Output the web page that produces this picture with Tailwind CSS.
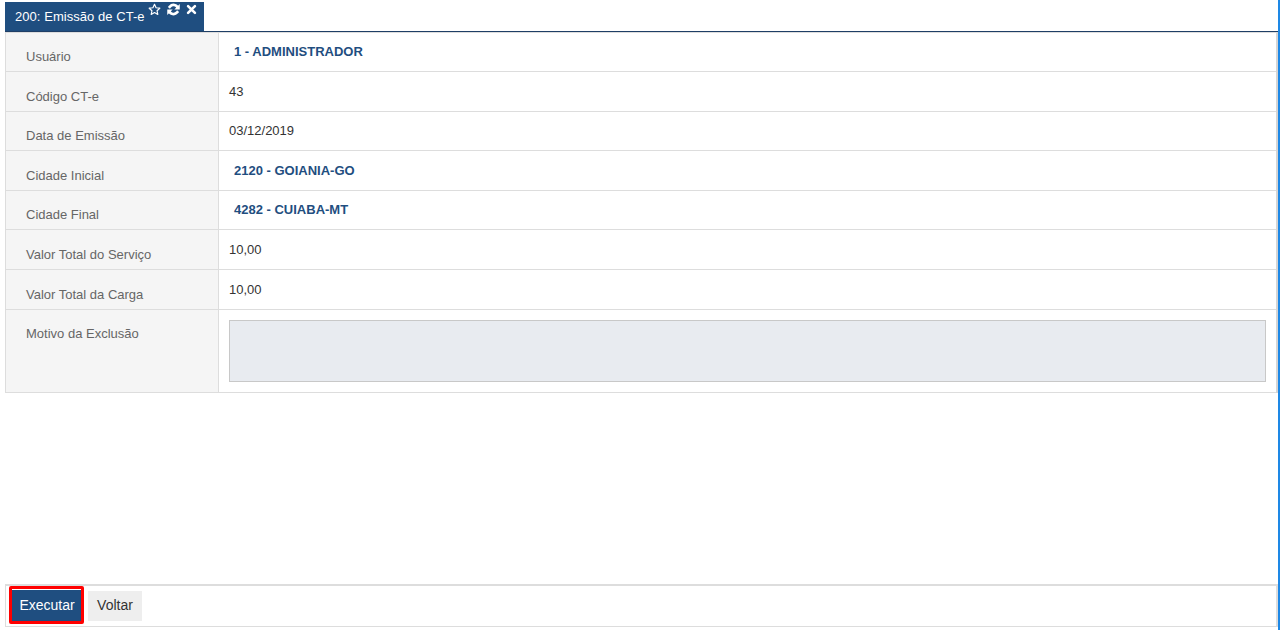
<!DOCTYPE html>
<html><head><meta charset="utf-8"><script src="https://cdn.jsdelivr.net/npm/@tailwindcss/browser@4"></script></head>
<body class="bg-white overflow-hidden font-['Liberation_Sans',Arial,sans-serif]">
<div class="relative w-[1280px] h-[630px] flex flex-col pl-[5px] pr-[2px] pt-[2px] bg-white">
  <div class="absolute right-0 top-0 bottom-0 w-[2px] bg-[#1e88e5]"></div>
  <div class="flex">
    <div class="w-[199px] h-[29px] bg-[#1f4e80] text-white flex items-start pl-[10px] relative">
      <span class="text-[13px] leading-[16px] mt-[7px] whitespace-nowrap tracking-[0.05px]">200: Emissão de CT-e</span>
      <svg class="absolute left-[143px] top-[1px]" width="13" height="13" viewBox="0 0 24 24" fill="none" stroke="white" stroke-width="2.2" stroke-linejoin="round"><path d="M12 2.5l2.9 6.3 6.9.8-5.1 4.7 1.4 6.8-6.1-3.4-6.1 3.4 1.4-6.8-5.1-4.7 6.9-.8z"/></svg>
      <svg class="absolute left-[162px] top-[1px]" width="13" height="13" viewBox="0 0 24 24" fill="none" stroke="white" stroke-width="5"><path d="M20 9.500A8.500 8.500 0 0 0 5.500 6.500L3.500 9"/><path d="M4 14.500a8.500 8.500 0 0 0 14.500 3l2-2.500"/><path d="M23.500 2v10h-10z" fill="white" stroke="none"/><path d="M.5 22v-10h10z" fill="white" stroke="none"/></svg>
      <svg class="absolute left-[181px] top-[2px]" width="11" height="11" viewBox="0 0 24 24" fill="none" stroke="white" stroke-width="5.600" stroke-linecap="round"><path d="M4.500 4.500l15 15M19.500 4.500l-15 15"/></svg>
    </div>
  </div>
  <div class="h-[1px] bg-[#1f3f66]"></div>
  <div class="border-t border-l border-r-2 border-[#dddddd] border-r-[#d5d5d5] text-[13px] text-[#333333]">
    <div class="flex h-[39px] border-b border-[#dddddd]"><div class="w-[213px] bg-[#f5f5f5] border-r border-[#dddddd] pl-[20px] pt-[16px] text-[#666666] leading-[16px]">Usuário</div><div class="pl-[15px] pt-[11px] font-bold text-[#1f4e80] leading-[16px]">1 - ADMINISTRADOR</div></div>
    <div class="flex h-[40px] border-b border-[#dddddd]"><div class="w-[213px] bg-[#f5f5f5] border-r border-[#dddddd] pl-[20px] pt-[17px] text-[#666666] leading-[16px]">Código CT-e</div><div class="pl-[10px] pt-[12px] leading-[16px]">43</div></div>
    <div class="flex h-[39px] border-b border-[#dddddd]"><div class="w-[213px] bg-[#f5f5f5] border-r border-[#dddddd] pl-[20px] pt-[16px] text-[#666666] leading-[16px]">Data de Emissão</div><div class="pl-[10px] pt-[11px] leading-[16px]">03/12/2019</div></div>
    <div class="flex h-[40px] border-b border-[#dddddd]"><div class="w-[213px] bg-[#f5f5f5] border-r border-[#dddddd] pl-[20px] pt-[17px] text-[#666666] leading-[16px]">Cidade Inicial</div><div class="pl-[15px] pt-[12px] font-bold text-[#1f4e80] leading-[16px]">2120 - GOIANIA-GO</div></div>
    <div class="flex h-[39px] border-b border-[#dddddd]"><div class="w-[213px] bg-[#f5f5f5] border-r border-[#dddddd] pl-[20px] pt-[16px] text-[#666666] leading-[16px]">Cidade Final</div><div class="pl-[15px] pt-[11px] font-bold text-[#1f4e80] leading-[16px]">4282 - CUIABA-MT</div></div>
    <div class="flex h-[40px] border-b border-[#dddddd]"><div class="w-[213px] bg-[#f5f5f5] border-r border-[#dddddd] pl-[20px] pt-[17px] text-[#666666] leading-[16px]">Valor Total do Serviço</div><div class="pl-[10px] pt-[12px] leading-[16px]">10,00</div></div>
    <div class="flex h-[40px] border-b border-[#dddddd]"><div class="w-[213px] bg-[#f5f5f5] border-r border-[#dddddd] pl-[20px] pt-[17px] text-[#666666] leading-[16px]">Valor Total da Carga</div><div class="pl-[10px] pt-[12px] leading-[16px]">10,00</div></div>
    <div class="flex h-[83px] border-b border-[#dddddd]"><div class="w-[213px] bg-[#f5f5f5] border-r border-[#dddddd] pl-[20px] pt-[16px] text-[#666666] leading-[16px]">Motivo da Exclusão</div><div class="flex-1 pl-[10px] pr-[10px] pt-[10px]"><div class="h-[62px] bg-[#e8ebf0] border border-[#c8c8c8]"></div></div></div>
  </div>
  <div class="flex-1"></div>
  <div class="mb-[3px] h-[43px] border-t-2 border-l border-r-2 border-b border-[#dddddd] flex items-start pl-[3px] gap-[4px]">
    <button class="w-[75px] h-[38px] border-[3px] border-[#ff0000] rounded-[2px] bg-[#1f4e80] text-white text-[14px] leading-[16px] pl-[1px] shadow-[inset_0_1px_0_white]">Executar</button>
    <button class="w-[54px] h-[30px] mt-[5px] bg-[#eeeeee] text-[#333333] text-[14px] leading-[16px] pb-[2px]">Voltar</button>
  </div>
</div>
</body></html>
